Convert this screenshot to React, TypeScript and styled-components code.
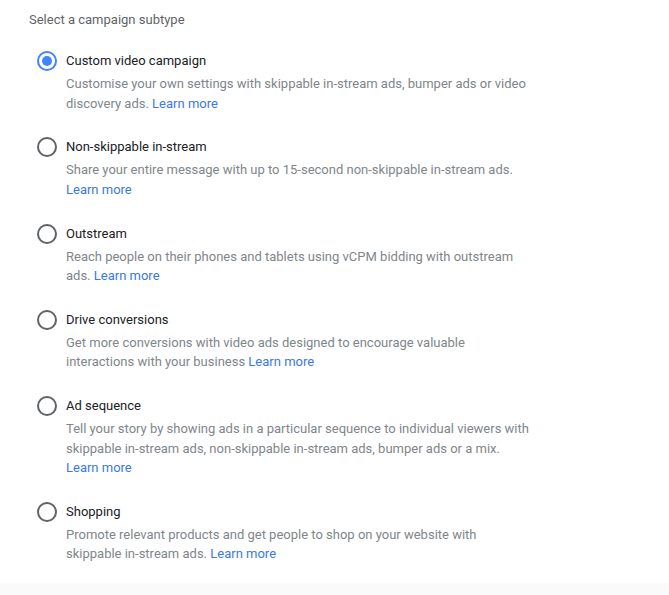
import React, { useState } from "react";
import styled, { createGlobalStyle } from "styled-components";

const Global = createGlobalStyle`
  html, body { margin: 0; padding: 0; background: #fafafa; }
  body { font-family: Roboto, "Noto Sans", Arial, sans-serif; -webkit-font-smoothing: antialiased; }
`;

const Panel = styled.div`
  background: #ffffff;
  height: 583px;
  box-sizing: border-box;
  padding: 10px 0 0 29px;
`;

const Heading = styled.div`
  font-size: 13px;
  line-height: 20px;
  color: #5f6368;
`;

const List = styled.div`
  display: flex;
  flex-direction: column;
  gap: 24.3px;
  margin-top: 21px;
  padding-left: 8px;
`;

const Option = styled.label`
  display: grid;
  grid-template-columns: 20px 1fr;
  column-gap: 9px;
  cursor: pointer;
`;

const Radio = styled.span<{ $checked: boolean }>`
  box-sizing: border-box;
  width: 20px;
  height: 20px;
  border-radius: 50%;
  border: 2px solid ${(p) => (p.$checked ? "#4285f4" : "#5f6368")};
  display: flex;
  align-items: center;
  justify-content: center;
  &::after {
    content: "";
    width: 10px;
    height: 10px;
    border-radius: 50%;
    background: ${(p) => (p.$checked ? "#4285f4" : "transparent")};
  }
`;

const Title = styled.div`
  font-size: 13px;
  line-height: 20px;
  color: #202124;
`;

const Desc = styled.div`
  grid-column: 2;
  margin-top: 3px;
  width: 468px;
  font-size: 13px;
  line-height: 19.5px;
  color: #80868b;
`;

const Link = styled.a`
  color: #3b78e7;
  text-decoration: none;
`;

const options = [
  {
    title: "Custom video campaign",
    desc: "Customise your own settings with skippable in-stream ads, bumper ads or video discovery ads.",
  },
  {
    title: "Non-skippable in-stream",
    desc: "Share your entire message with up to 15-second non-skippable in-stream ads.",
  },
  {
    title: "Outstream",
    desc: "Reach people on their phones and tablets using vCPM bidding with outstream ads.",
  },
  {
    title: "Drive conversions",
    desc: "Get more conversions with video ads designed to encourage valuable interactions with your business",
  },
  {
    title: "Ad sequence",
    desc: "Tell your story by showing ads in a particular sequence to individual viewers with skippable in-stream ads, non-skippable in-stream ads, bumper ads or a mix.",
  },
  {
    title: "Shopping",
    desc: "Promote relevant products and get people to shop on your website with skippable in-stream ads.",
  },
];

export default function App() {
  const [selected, setSelected] = useState(0);
  return (
    <>
      <Global />
      <Panel>
        <Heading>Select a campaign subtype</Heading>
        <List>
          {options.map((o, i) => (
            <Option key={o.title} onClick={() => setSelected(i)}>
              <Radio $checked={selected === i} />
              <Title>{o.title}</Title>
              <Desc>
                {o.desc} <Link href="#">Learn more</Link>
              </Desc>
            </Option>
          ))}
        </List>
      </Panel>
    </>
  );
}
